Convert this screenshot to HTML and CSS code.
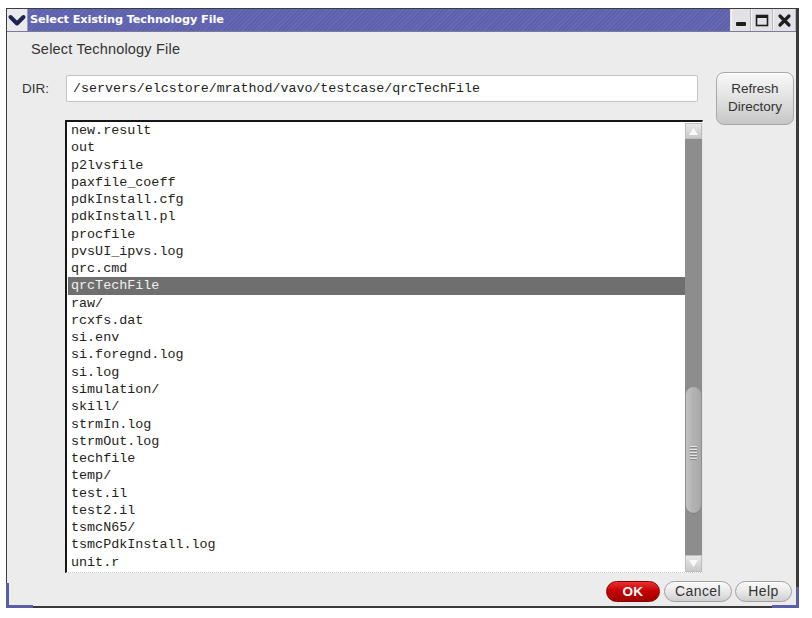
FILE: index.html
```html
<!DOCTYPE html>
<html>
<head>
<meta charset="utf-8">
<link rel="stylesheet" href="styles.css">
</head>
<body>
<div class="window">
  <div class="titlebar">
    <div class="menu-btn">
      <svg width="20" height="21" viewBox="0 0 20 21"><path d="M3.5 7 L10 13.5 L16.5 7" fill="none" stroke="#1c2550" stroke-width="4" stroke-linecap="round" stroke-linejoin="round"/></svg>
    </div>
    <div class="title">Select Existing Technology File</div>
    <div class="ctrls">
      <div class="ctrl"><svg width="16" height="19" viewBox="0 0 16 19"><rect x="3" y="11" width="10" height="4" rx="1" fill="#1e1e1e"/></svg></div>
      <div class="ctrl"><svg width="18" height="19" viewBox="0 0 18 19"><rect x="3.5" y="4.5" width="11" height="10" fill="none" stroke="#1e1e1e" stroke-width="1.6"/><rect x="3" y="4" width="12" height="3" fill="#1e1e1e"/></svg></div>
      <div class="ctrl"><svg width="19" height="19" viewBox="0 0 19 19"><path d="M5 5 L14 14 M14 5 L5 14" stroke="#1e1e1e" stroke-width="3.2" stroke-linecap="round"/></svg></div>
    </div>
  </div>
  <div class="content">
    <div class="heading">Select Technology File</div>
    <div class="dir-row">
      <div class="dir-label">DIR:</div>
      <div class="dir-input">/servers/elcstore/mrathod/vavo/testcase/qrcTechFile</div>
      <div class="btn refresh">Refresh<br>Directory</div>
    </div>
    <div class="list">
      <div class="items">
        <div class="item">new.result</div>
        <div class="item">out</div>
        <div class="item">p2lvsfile</div>
        <div class="item">paxfile_coeff</div>
        <div class="item">pdkInstall.cfg</div>
        <div class="item">pdkInstall.pl</div>
        <div class="item">procfile</div>
        <div class="item">pvsUI_ipvs.log</div>
        <div class="item">qrc.cmd</div>
        <div class="item selected">qrcTechFile</div>
        <div class="item">raw/</div>
        <div class="item">rcxfs.dat</div>
        <div class="item">si.env</div>
        <div class="item">si.foregnd.log</div>
        <div class="item">si.log</div>
        <div class="item">simulation/</div>
        <div class="item">skill/</div>
        <div class="item">strmIn.log</div>
        <div class="item">strmOut.log</div>
        <div class="item">techfile</div>
        <div class="item">temp/</div>
        <div class="item">test.il</div>
        <div class="item">test2.il</div>
        <div class="item">tsmcN65/</div>
        <div class="item">tsmcPdkInstall.log</div>
        <div class="item">unit.r</div>
      </div>
      <div class="scrollbar">
        <div class="sb-btn"><svg width="15" height="15" viewBox="0 0 15 15"><path d="M3 11 L7.5 4 L12 11 Z" fill="#fafafa"/></svg></div>
        <div class="track">
          <div class="thumb">
            <div class="grip"><span></span><span></span><span></span><span></span><span></span></div>
          </div>
        </div>
        <div class="sb-btn"><svg width="15" height="16" viewBox="0 0 15 16"><path d="M3 4 L7.5 11 L12 4 Z" fill="#fafafa"/></svg></div>
      </div>
    </div>
    <div class="buttons">
      <div class="btn pill ok">OK</div>
      <div class="btn pill cancel">Cancel</div>
      <div class="btn pill help">Help</div>
    </div>
  </div>
  <div class="corner corner-left"></div>
  <div class="corner corner-right"></div>
</div>
</body>
</html>
```

FILE: styles.css
```css
html, body {
  margin: 0;
  padding: 0;
  background: #ffffff;
}

body {
  font-family: "Liberation Sans", Arial, sans-serif;
  font-size: 13px;
  color: #333;
}

.window {
  position: relative;
  margin: 8px 0 0 6px;
  width: 789px;
  height: 597px;
  border: 1px solid #3c3c3c;
  border-right: 3px solid #3a3a3a;
  border-bottom: 2px solid #3a3a3a;
  background: #ececec;
  box-sizing: content-box;
}

.titlebar {
  display: flex;
  height: 22px;
  background: repeating-linear-gradient(135deg, #5d61ab 0 1px, #676bb5 1px 2px, #5f63ad 2px 3px);
  border-bottom: 1px solid #7a7a9a;
}

.menu-btn {
  width: 20px;
  height: 22px;
  background: #e9e9ee;
  border-right: 1px solid #9a9ab8;
  margin-right: 2px;
  display: flex;
  align-items: center;
  justify-content: center;
}

.title {
  flex: 1;
  color: #ffffff;
  font-family: "DejaVu Sans", sans-serif;
  font-weight: bold;
  font-size: 11.3px;
  line-height: 22px;
  letter-spacing: -0.1px;
}

.ctrls {
  display: flex;
  background: #e2e2e6;
  padding-left: 1px;
}

.ctrl {
  height: 22px;
  display: flex;
  align-items: center;
  justify-content: center;
  padding: 0 1px;
  border-left: 1px solid #f4f4f4;
  border-right: 1px solid #b9b9c0;
}

.content {
  padding: 9px 0 0 0;
}

.heading {
  padding-left: 24px;
  line-height: 17px;
  font-size: 14.5px;
  letter-spacing: 0.2px;
  color: #333;
}

.dir-row {
  display: flex;
  align-items: flex-start;
  height: 27px;
  margin-top: 17px;
}

.dir-label {
  width: 44px;
  padding-left: 15px;
  line-height: 27px;
  font-size: 13.5px;
  color: #333;
}

.dir-input {
  width: 624px;
  height: 25px;
  padding-left: 6px;
  background: #ffffff;
  border: 1px solid #c4c4c4;
  border-radius: 2px;
  font-family: "Liberation Mono", "Courier New", monospace;
  font-size: 13.3px;
  line-height: 25px;
  color: #222;
}

.btn {
  box-sizing: border-box;
  text-align: center;
  color: #333;
  font-size: 13.5px;
}

.refresh {
  margin-left: 18px;
  margin-top: -3px;
  width: 78px;
  height: 53px;
  border: 1px solid #a8a8a8;
  border-radius: 8px;
  background: linear-gradient(#f8f8f8, #e4e4e4 45%, #c6c6c6);
  line-height: 18px;
  padding-top: 7px;
  box-shadow: inset 0 1px 0 #ffffff;
}

.list {
  display: flex;
  margin: 18px 0 0 58px;
  width: 638px;
  height: 453px;
  box-sizing: border-box;
  border-top: 2px solid #161616;
  border-left: 2px solid #161616;
  border-right: 1px solid #e6e6e6;
  border-bottom: 1px dotted #c8c8c8;
  background: #ffffff;
}

.items {
  width: 618px;
  overflow: hidden;
  font-family: "Liberation Mono", "Courier New", monospace;
  font-size: 13.4px;
  color: #222;
}

.item {
  height: 17.28px;
  line-height: 17.28px;
  padding-left: 3px;
  margin-left: 1px;
  white-space: pre;
}

.item.selected {
  background: #6f6f6f;
  color: #f0f0f0;
}

.scrollbar {
  width: 17px;
  display: flex;
  flex-direction: column;
  padding-top: 1px;
}

.sb-btn {
  height: 16px;
  background: linear-gradient(#e8e8e8, #c9c9c9);
  display: flex;
  align-items: center;
  justify-content: center;
  border: 1px solid #bdbdbd;
  box-sizing: border-box;
}

.scrollbar .sb-btn:last-child {
  height: 17px;
}

.track {
  height: 416px;
  background: #8d8d8d;
  padding-top: 248px;
  box-sizing: border-box;
}

.thumb {
  margin: 0 1px;
  height: 127px;
  border-radius: 8px;
  background: linear-gradient(90deg, #c2c2c2, #b4b4b4 40%, #a8a8a8);
  box-shadow: inset 0 -1px 0 #7a7a7a;
  display: flex;
  align-items: center;
  justify-content: center;
}

.grip {
  display: flex;
  flex-direction: column;
  gap: 1px;
  margin-top: 4px;
}

.grip span {
  display: block;
  width: 7px;
  height: 1px;
  background: #e6e6e6;
  border-bottom: 1px solid #8a8a8a;
}

.buttons {
  display: flex;
  justify-content: flex-end;
  gap: 3px;
  margin-top: 8px;
  padding-right: 4px;
}

.pill {
  height: 21px;
  line-height: 19px;
  border-radius: 11px;
  border: 1px solid #a0a0a0;
  background: linear-gradient(#fbfbfb, #e8e8e8 50%, #cfcfcf);
  font-size: 14px;
  letter-spacing: 0.4px;
}

.ok {
  width: 54px;
  margin-right: 1px;
  background: linear-gradient(#e83030, #c40000 50%, #a00000);
  border-color: #8a0000;
  color: #ffffff;
  font-weight: bold;
  font-size: 13.5px;
}

.cancel {
  width: 68px;
}

.help {
  width: 57px;
}

.corner {
  position: absolute;
  bottom: -2px;
  border-bottom: 3px solid #5a5ea8;
}

.corner-left {
  left: -1px;
  width: 24px;
  height: 22px;
  border-left: 3px solid #5a5ea8;
}

.corner-right {
  right: -3px;
  width: 24px;
  height: 18px;
  border-right: 3px solid #5a5ea8;
}
```
